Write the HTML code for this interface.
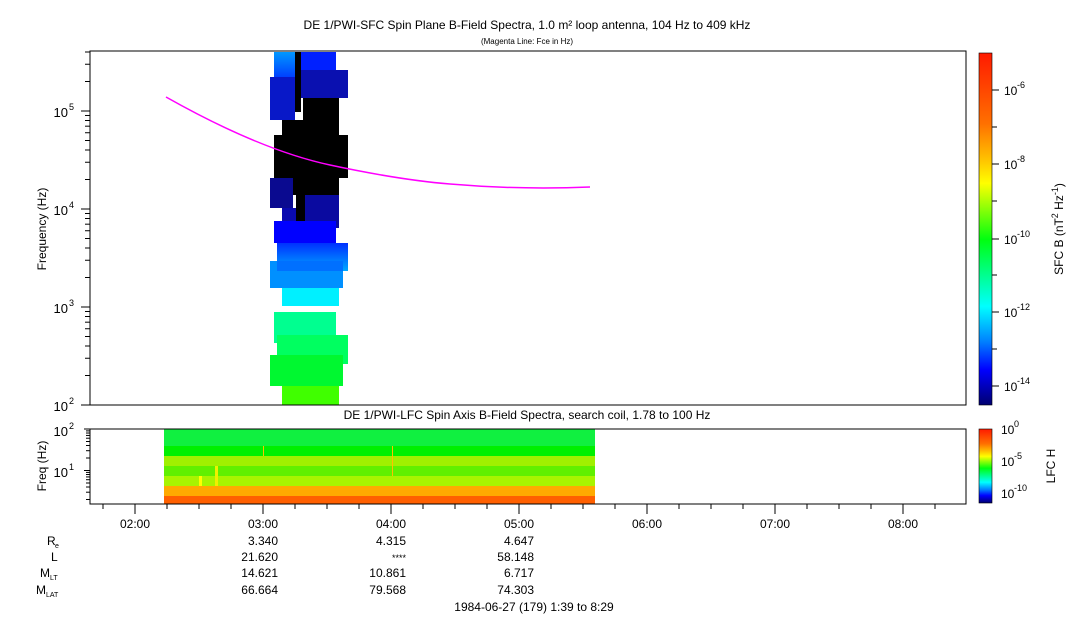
<!DOCTYPE html>
<html><head><meta charset="utf-8"><style>
html,body{margin:0;padding:0;background:#fff;}
svg{display:block;font-family:"Liberation Sans",sans-serif;}
</style></head><body>
<svg id="s" width="1083" height="620" viewBox="0 0 1083 620" xmlns="http://www.w3.org/2000/svg">
<defs>
<linearGradient id="cb" x1="0" y1="0" x2="0" y2="1">
<stop offset="0" stop-color="#ff1a00"/>
<stop offset="0.2" stop-color="#ff7000"/>
<stop offset="0.3" stop-color="#ffc000"/>
<stop offset="0.37" stop-color="#ffff00"/>
<stop offset="0.53" stop-color="#00ff10"/>
<stop offset="0.72" stop-color="#00ffff"/>
<stop offset="0.82" stop-color="#0080ff"/>
<stop offset="0.9" stop-color="#0000ff"/>
<stop offset="1" stop-color="#000070"/>
</linearGradient>
<linearGradient id="g1" x1="0" y1="0" x2="0" y2="1"><stop offset="0" stop-color="#0098ff"/><stop offset="1" stop-color="#0040ff"/></linearGradient>
<linearGradient id="g2" x1="0" y1="0" x2="0" y2="1"><stop offset="0" stop-color="#0030ff"/><stop offset="1" stop-color="#00a8ff"/></linearGradient>
</defs>
<text x="527" y="29" font-size="12" text-anchor="middle">DE 1/PWI-SFC  Spin Plane B-Field Spectra, 1.0 m² loop antenna, 104 Hz to 409 kHz</text>
<text x="527" y="44" font-size="8" text-anchor="middle">(Magenta Line: Fce in Hz)</text>

<g>
<rect x="274" y="52" width="21" height="25" fill="url(#g1)"/>
<rect x="270" y="77" width="25" height="43" fill="#0818c8"/>
<rect x="301" y="52" width="35" height="18" fill="#0020ff"/>
<rect x="301" y="70" width="47" height="28" fill="#0a10b0"/>
<rect x="282" y="120" width="57" height="15" fill="#000"/>
<rect x="303" y="98" width="36" height="25" fill="#000"/>
<rect x="274" y="135" width="74" height="43" fill="#000"/>
<rect x="270" y="178" width="23" height="30" fill="#0a0a90"/>
<rect x="293" y="178" width="46" height="17" fill="#000"/>
<rect x="305" y="195" width="34" height="33" fill="#0a0aa0"/>
<rect x="282" y="208" width="14" height="17" fill="#0a0ab0"/>
<rect x="296" y="195" width="9" height="30" fill="#000"/>
<rect x="295" y="52" width="6" height="60" fill="#000"/>
<rect x="274" y="221" width="62" height="22" fill="#0000ff"/>
<rect x="277" y="243" width="71" height="28" fill="url(#g2)"/>
<rect x="270" y="261" width="73" height="27" fill="#0090ff"/>
<rect x="277" y="261" width="66" height="10" fill="#0070ff"/>
<rect x="282" y="288" width="57" height="18" fill="#00f0ff"/>
<rect x="274" y="312" width="62" height="31" fill="#00ff90"/>
<rect x="277" y="335" width="71" height="29" fill="#00ff60"/>
<rect x="270" y="355" width="73" height="31" fill="#00f830"/>
<rect x="282" y="386" width="57" height="19" fill="#40ff00"/>
</g>
<path fill="none" stroke="#ff00ff" stroke-width="1.5" d="M166,97 Q260,150 330,165 T450,184 Q520,190 590,187"/>
<rect x="90" y="51" width="876" height="354" fill="none" stroke="#000" stroke-width="1"/>
<g font-size="13">
<text x="68" y="117" text-anchor="end">10</text><text x="69" y="110" font-size="9">5</text>
<text x="68" y="215" text-anchor="end">10</text><text x="69" y="208" font-size="9">4</text>
<text x="68" y="313" text-anchor="end">10</text><text x="69" y="306" font-size="9">3</text>
<text x="68" y="411" text-anchor="end">10</text><text x="69" y="404" font-size="9">2</text>
<text transform="translate(46,229) rotate(-90)" text-anchor="middle" font-size="12">Frequency (Hz)</text>
</g>
<g id="yt" stroke="#000"></g>

<rect x="979" y="53" width="13" height="352" fill="url(#cb)" stroke="#000" stroke-width="0.6"/>
<g font-size="12">
<text x="1004" y="95">10</text><text x="1017" y="88" font-size="9">-6</text>
<text x="1004" y="169">10</text><text x="1017" y="162" font-size="9">-8</text>
<text x="1004" y="244">10</text><text x="1017" y="237" font-size="9">-10</text>
<text x="1004" y="317">10</text><text x="1017" y="310" font-size="9">-12</text>
<text x="1004" y="391">10</text><text x="1017" y="384" font-size="9">-14</text>
<text transform="translate(1063,229) rotate(-90)" text-anchor="middle">SFC B (nT<tspan font-size="9" dy="-5">2</tspan><tspan dy="5"> Hz</tspan><tspan font-size="9" dy="-5">-1</tspan><tspan dy="5">)</tspan></text>
</g>
<g stroke="#000">
<line x1="992" y1="90" x2="999" y2="90"/><line x1="992" y1="127" x2="997" y2="127"/>
<line x1="992" y1="164" x2="999" y2="164"/><line x1="992" y1="201" x2="997" y2="201"/>
<line x1="992" y1="239" x2="999" y2="239"/><line x1="992" y1="275" x2="997" y2="275"/>
<line x1="992" y1="312" x2="999" y2="312"/><line x1="992" y1="349" x2="997" y2="349"/>
<line x1="992" y1="386" x2="999" y2="386"/>
</g>

<text x="527" y="419" font-size="12" text-anchor="middle">DE 1/PWI-LFC  Spin Axis B-Field Spectra, search coil, 1.78 to 100 Hz</text>
<g>
<rect x="164" y="429" width="431" height="17" fill="#10f040"/>
<rect x="164" y="446" width="431" height="10" fill="#00f000"/>
<rect x="164" y="456" width="431" height="10" fill="#a0f000"/>
<rect x="164" y="466" width="431" height="10" fill="#60f000"/>
<rect x="164" y="476" width="431" height="10" fill="#a8f400"/>
<rect x="164" y="486" width="431" height="10" fill="#ffaa00"/>
<rect x="164" y="496" width="431" height="8" fill="#ff6000"/>
<rect x="263" y="446" width="1" height="10" fill="#ffc000"/>
<rect x="392" y="446" width="1" height="30" fill="#ffc000"/>
<rect x="215" y="466" width="3" height="20" fill="#f0f000"/>
<rect x="199" y="476" width="3" height="10" fill="#ffff00"/>
</g>
<rect x="90" y="429" width="876" height="75" fill="none" stroke="#000"/>
<g font-size="13">
<text x="68" y="436" text-anchor="end">10</text><text x="69" y="429" font-size="9">2</text>
<text x="68" y="477" text-anchor="end">10</text><text x="69" y="470" font-size="9">1</text>
<text transform="translate(46,466) rotate(-90)" text-anchor="middle" font-size="12">Freq (Hz)</text>
</g>
<rect x="979" y="429" width="13" height="74" fill="url(#cb)" stroke="#000" stroke-width="0.6"/>
<g font-size="12">
<text x="1001" y="434">10</text><text x="1014" y="427" font-size="9">0</text>
<text x="1001" y="466">10</text><text x="1014" y="459" font-size="9">-5</text>
<text x="1001" y="498">10</text><text x="1014" y="491" font-size="9">-10</text>
<text transform="translate(1055,466) rotate(-90)" text-anchor="middle">LFC H</text>
</g>
<g id="bt" stroke="#000"></g>

<g font-size="12" text-anchor="middle">
<text x="135" y="528">02:00</text><text x="263" y="528">03:00</text>
<text x="391" y="528">04:00</text><text x="519" y="528">05:00</text>
<text x="647" y="528">06:00</text><text x="775" y="528">07:00</text>
<text x="903" y="528">08:00</text>
</g>
<g font-size="12">
<text x="47" y="545">R</text><text x="55" y="548" font-size="7">e</text>
<text x="51" y="561">L</text>
<text x="40" y="577">M</text><text x="50" y="580" font-size="7">LT</text>
<text x="36" y="594">M</text><text x="46" y="597" font-size="7">LAT</text>
</g>
<g font-size="12" text-anchor="end">
<text x="278" y="545">3.340</text><text x="406" y="545">4.315</text><text x="534" y="545">4.647</text>
<text x="278" y="561">21.620</text><text x="406" y="561" font-size="9">****</text><text x="534" y="561">58.148</text>
<text x="278" y="577">14.621</text><text x="406" y="577">10.861</text><text x="534" y="577">6.717</text>
<text x="278" y="594">66.664</text><text x="406" y="594">79.568</text><text x="534" y="594">74.303</text>
</g>
<text x="534" y="611" font-size="12" text-anchor="middle">1984-06-27 (179) 1:39 to 8:29</text>
</svg>
<script>
var ns="http://www.w3.org/2000/svg";
function L(g,x1,y1,x2,y2){var l=document.createElementNS(ns,"line");l.setAttribute("x1",x1);l.setAttribute("y1",y1);l.setAttribute("x2",x2);l.setAttribute("y2",y2);g.appendChild(l);}
var yt=document.getElementById("yt");
for(var d=0;d<4;d++){var base=405-98*d;L(yt,81,base,90,base);
 for(var k=2;k<10;k++){var y=base-98*Math.log10(k);if(y>=51)L(yt,85,y,90,y);}}
var bt=document.getElementById("bt");
var dec=41.5;
L(bt,84,470.5,90,470.5);L(bt,84,429,90,429);
for(var d=0;d<2;d++){for(var k=2;k<10;k++){var y=470.5+dec-dec*d-dec*Math.log10(k);if(y>=429&&y<=504)L(bt,86,y,90,y);}}
for(var x=103;x<966;x+=32){var maj=Math.abs((x-135)%128)<1;L(bt,x,504,x,maj?514:509);}
</script>
</body></html>
